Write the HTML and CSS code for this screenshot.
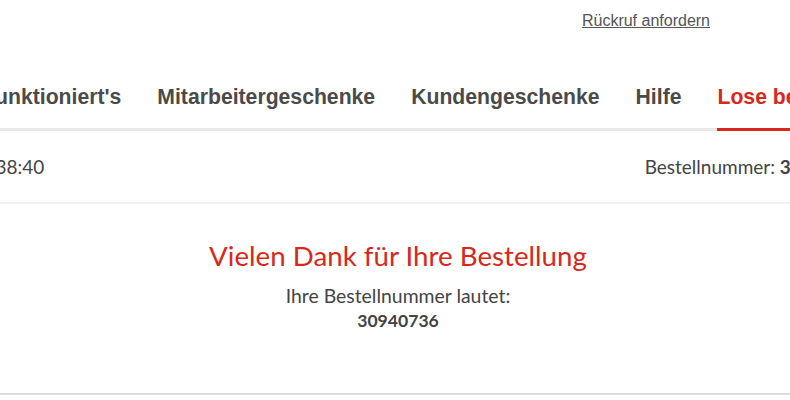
FILE: index.html
```html
<!DOCTYPE html>
<html lang="de">
<head>
<meta charset="utf-8">
<title>Bestellung abgeschlossen</title>
<link rel="stylesheet" href="styles.css">
</head>
<body>

<div class="page">

   <div class="topbar">
      <a href="#" class="callback">Rückruf anfordern</a>
   </div>

   <nav class="mainnav">
      <a href="#" class="nav-item">So funktioniert's</a>
      <a href="#" class="nav-item">Mitarbeitergeschenke</a>
      <a href="#" class="nav-item">Kundengeschenke</a>
      <a href="#" class="nav-item">Hilfe</a>
      <a href="#" class="nav-item active">Lose bestellen</a>
   </nav>

   <div class="order-info">
      <span class="order-date">Bestelldatum: 14.06.2021 11:38:40</span>
      <span class="order-number">Bestellnummer: <b>30940736</b></span>
   </div>

   <div class="confirm">
      <h1 class="confirm-title">Vielen Dank für Ihre Bestellung</h1>
      <p class="confirm-text">Ihre Bestellnummer lautet:</p>
      <p class="confirm-number">30940736</p>
   </div>

</div> <!-- end of page -->

</body>
</html>
```

FILE: styles.css
```css
body
{
   margin: 0;
   background: #ffffff;
   overflow: hidden;
}

.page
{
   width: 1000px;
   margin-left: -102px;
}

.topbar
{
   display: flex;
   justify-content: flex-end;
   height: 40px;
   padding: 12px 188px 0 0;
   box-sizing: border-box;
}

.callback
{
   font-family: "Liberation Sans", Arial, sans-serif;
   font-size: 16px;
   color: #555555;
   text-decoration: underline;
}

.mainnav
{
   display: flex;
   padding-left: 39px;
   height: 88px;
   align-items: flex-end;
   border-bottom: 3px solid #e8e8e8;
}

.nav-item
{
   font-family: "Liberation Sans", Arial, sans-serif;
   font-weight: bold;
   font-size: 21.2px;
   color: #4a4a4a;
   text-decoration: none;
   margin: 0 18px -3px 18px;
   padding-bottom: 19px;
   border-bottom: 3px solid transparent;
   white-space: nowrap;
}

.nav-item.active
{
   color: #d8281c;
   border-bottom-color: #d8281c;
}

.order-info
{
   display: flex;
   align-items: center;
   height: 71px;
   padding-right: 30px;
   border-bottom: 2px solid #f1f1f1;
   font-family: Lato, sans-serif;
   font-size: 19px;
   color: #444444;
}

.order-date
{
   margin-left: -150px;
}

.order-number
{
   margin-left: auto;
}

.confirm
{
   height: 191px;
   padding-top: 34px;
   box-sizing: border-box;
   text-align: center;
   background: #ffffff;
   border-bottom: 2px solid #dddddd;
   box-shadow: 0 2px 3px rgba(0, 0, 0, 0.06);
   font-family: Lato, sans-serif;
}

.confirm-title
{
   margin: 0;
   font-weight: normal;
   font-size: 27.7px;
   line-height: 36px;
   color: #d8281c;
}

.confirm-text
{
   margin: 10px 0 0 0;
   font-size: 19.4px;
   line-height: 24px;
   color: #444444;
}

.confirm-number
{
   margin: 1px 0 0 0;
   font-size: 17.6px;
   font-weight: bold;
   line-height: 24px;
   color: #444444;
}
```
